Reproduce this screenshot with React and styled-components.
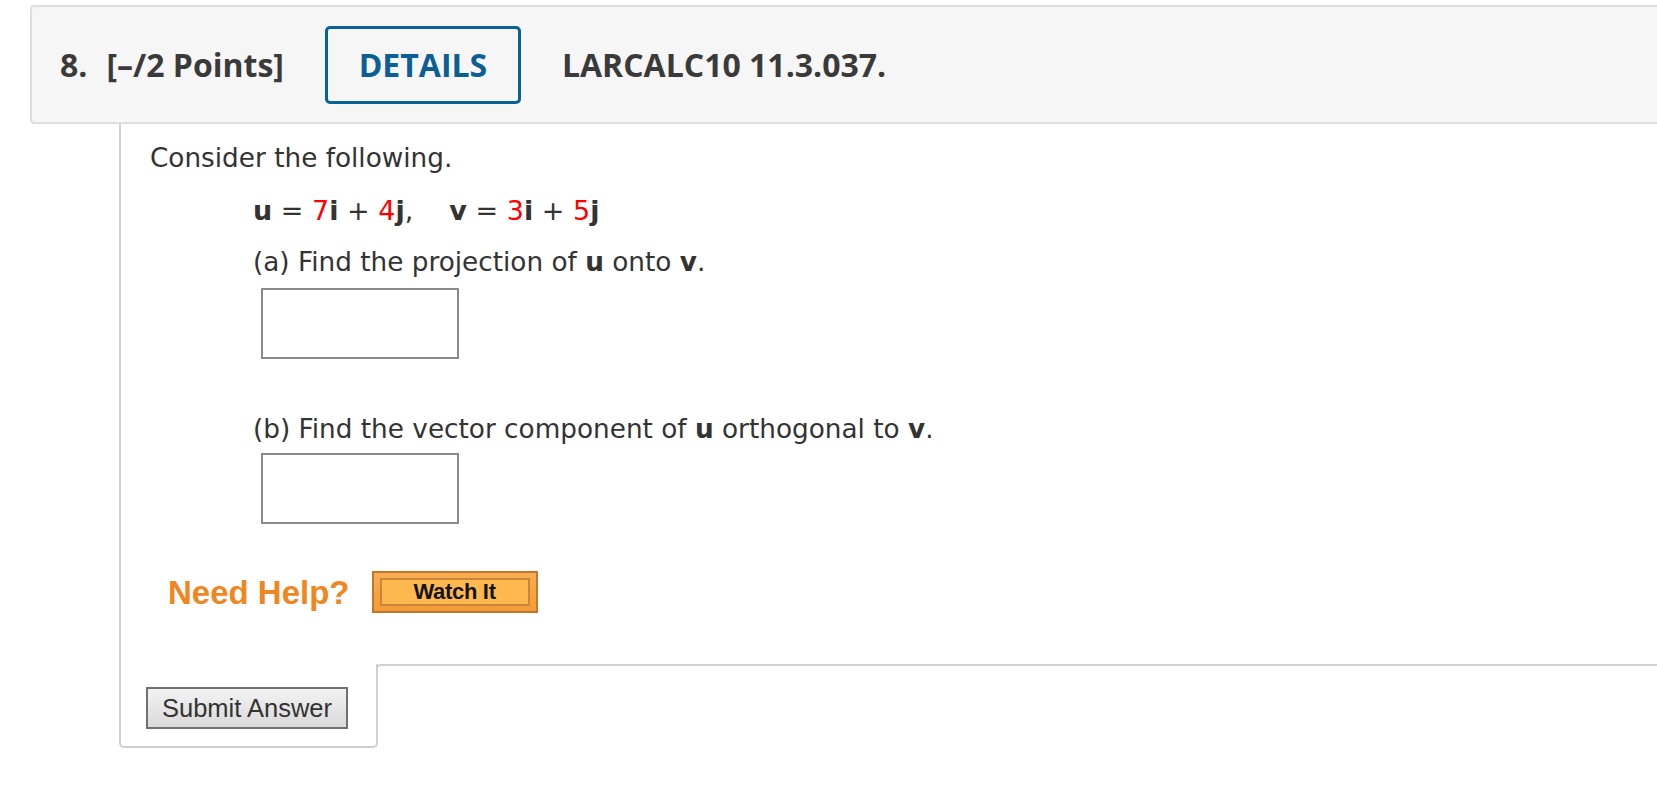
import styled, { createGlobalStyle } from "styled-components";

const GlobalStyle = createGlobalStyle`
  html, body {
    margin: 0;
    padding: 0;
    background: #ffffff;
  }
  body {
    font-family: "DejaVu Sans", Verdana, sans-serif;
    color: #333;
  }
`;

const Page = styled.div`
  padding: 5px 0 40px 30px;
  overflow: hidden;
`;

const Header = styled.div`
  box-sizing: border-box;
  height: 119px;
  display: flex;
  align-items: center;
  padding-left: 28px;
  background: #f6f6f6;
  border: 2px solid #dedede;
  border-right: none;
  border-radius: 4px 0 0 4px;
  font-family: "Open Sans", "Noto Sans", sans-serif;
  font-weight: 700;
  font-size: 32px;
  color: #3a3a3a;
`;

const Number = styled.span`
  margin-right: 19px;
`;

const Points = styled.span`
  margin-right: 41px;
`;

const DetailsButton = styled.button`
  box-sizing: border-box;
  width: 196px;
  height: 78px;
  border: 3px solid #0a6199;
  border-radius: 5px;
  background: transparent;
  color: #0b5f94;
  font: inherit;
  padding: 0;
  margin-right: 41px;
`;

const Title = styled.span``;

const Panel = styled.div`
  margin-left: 89px;
`;

const Body = styled.div`
  border-left: 2px solid #d0d0d0;
  padding: 19px 0 51px 29px;
  font-size: 26.3px;
  line-height: 30px;
`;

const Para = styled.p`
  margin: 0;
`;

const Indented = styled.div`
  margin-left: 103px;
  margin-top: ${(p) => p.$top}px;
`;

const MathLine = styled(Indented)`
  font-size: 27px;
`;

const Bold = styled.b`
  font-weight: 700;
`;

const Red = styled.span`
  color: #ff0000;
`;

const Gap = styled.span`
  display: inline-block;
  width: ${(p) => p.$w}px;
`;

const AnswerBox = styled.input`
  display: block;
  box-sizing: border-box;
  width: 198px;
  height: 71px;
  margin: ${(p) => p.$top}px 0 0 8px;
  border: 2px solid #8a8a8a;
  background: #fff;
  outline: none;
`;

const HelpRow = styled.div`
  display: flex;
  align-items: center;
  margin: 47px 0 0 18px;
`;

const HelpLabel = styled.span`
  font-family: "Liberation Sans", Arial, sans-serif;
  font-weight: 700;
  font-size: 33px;
  color: #f0861f;
  margin-right: 22px;
  line-height: 41px;
`;

const WatchOuter = styled.span`
  box-sizing: border-box;
  display: inline-flex;
  width: 166px;
  height: 42px;
  padding: 5px 6px;
  border: 2px solid #c47729;
  background: linear-gradient(#f8ae55, #f39a36);
`;

const WatchInner = styled.span`
  flex: 1;
  display: flex;
  align-items: center;
  justify-content: center;
  border: 2px solid #c98636;
  background: #ffb84d;
  font-family: "Liberation Sans", Arial, sans-serif;
  font-weight: 700;
  font-size: 22px;
  letter-spacing: -0.3px;
  color: #141414;
`;

const Footer = styled.div`
  display: flex;
`;

const SubmitTab = styled.div`
  box-sizing: border-box;
  width: 259px;
  padding: 23px 0 17px 25px;
  border: 2px solid #d0d0d0;
  border-top: none;
  border-radius: 0 0 5px 5px;
`;

const SubmitButton = styled.button`
  box-sizing: border-box;
  width: 202px;
  height: 42px;
  padding: 0;
  border: 2px solid #707070;
  background: linear-gradient(#f3f3f3, #d9d9d9);
  font-family: "Liberation Sans", Arial, sans-serif;
  font-size: 25.5px;
  color: #333;
`;

const FooterRest = styled.div`
  flex: 1;
  align-self: flex-start;
  height: 20px;
  margin-left: -2px;
  border-top: 2px solid #d0d0d0;
  border-left: 2px solid #d0d0d0;
  border-top-left-radius: 5px;
`;

export default function App() {
  return (
    <>
      <GlobalStyle />
      <Page>
        <Header>
          <Number>8.</Number>
          <Points>[–/2 Points]</Points>
          <DetailsButton>DETAILS</DetailsButton>
          <Title>LARCALC10 11.3.037.</Title>
        </Header>
        <Panel>
          <Body>
            <Para>Consider the following.</Para>
            <MathLine $top={23}>
              <Bold>u</Bold> = <Red>7</Red><Bold>i</Bold> + <Red>4</Red>
              <Bold>j</Bold>,<Gap $w={36} />
              <Bold>v</Bold> = <Red>3</Red><Bold>i</Bold> + <Red>5</Red>
              <Bold>j</Bold>
            </MathLine>
            <Indented $top={21}>
              (a) Find the projection of <Bold>u</Bold> onto <Bold>v</Bold>.
              <AnswerBox type="text" $top={11} />
            </Indented>
            <Indented $top={55}>
              (b) Find the vector component of <Bold>u</Bold> orthogonal to{" "}
              <Bold>v</Bold>.
              <AnswerBox type="text" $top={9} />
            </Indented>
            <HelpRow>
              <HelpLabel>Need Help?</HelpLabel>
              <WatchOuter>
                <WatchInner>Watch It</WatchInner>
              </WatchOuter>
            </HelpRow>
          </Body>
          <Footer>
            <SubmitTab>
              <SubmitButton>Submit Answer</SubmitButton>
            </SubmitTab>
            <FooterRest />
          </Footer>
        </Panel>
      </Page>
    </>
  );
}
